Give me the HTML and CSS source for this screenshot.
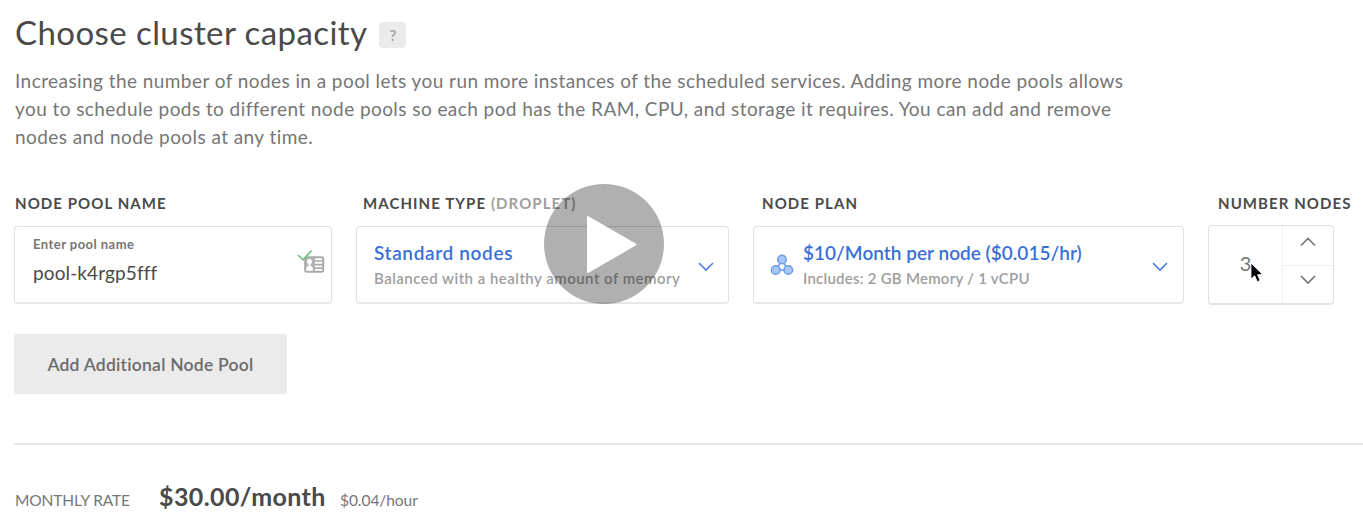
FILE: index.html
```html
<!DOCTYPE html>
<html lang="en">
<head>
<meta charset="utf-8">
<title>Choose cluster capacity</title>
<link rel="stylesheet" href="styles.css">
</head>
<body>
<main class="page">
  <header class="heading">
    <h1 class="title">Choose cluster capacity</h1>
    <span class="help">?</span>
  </header>
  <p class="intro">Increasing the number of nodes in a pool lets you run more instances of the scheduled services. Adding more node pools allows<br>you to schedule pods to different node pools so each pod has the RAM, CPU, and storage it requires. You can add and remove<br>nodes and node pools at any time.</p>

  <section class="pool">
    <div class="field field-name">
      <div class="label">NODE POOL NAME</div>
      <div class="box">
        <div class="copy">
          <div class="hint">Enter pool name</div>
          <div class="value">pool-k4rgp5fff</div>
        </div>
        <svg class="card-icon" width="30" height="26" viewBox="0 0 30 26">
          <rect x="8.200" y="7.200" width="18" height="14.600" rx="1.500" fill="#fff" stroke="#aaa" stroke-width="2"/>
          <path d="M16.900 7v15M17 11h9M17 14.600h9M17 18.200h9" stroke="#aaa" stroke-width="1.700"/>
          <path d="M8.500 7.500h8v14h-8z" fill="#b3b3b3"/>
          <circle cx="12.500" cy="11.500" r="2.500" fill="#fff"/>
          <path d="M9.200 20.800v-2.500q0-2 2.300-2.600v-3h2v3q2.300.6 2.300 2.600v2.500z" fill="#fff"/>
          <path d="M1 5l5 4.800L14.500.7" fill="none" stroke="#6fbf85" stroke-width="1.700"/>
        </svg>
      </div>
    </div>
    <div class="field field-machine">
      <div class="label">MACHINE TYPE <span class="light">(DROPLET)</span></div>
      <div class="box">
        <div class="copy">
          <div class="choice">Standard nodes</div>
          <div class="detail">Balanced with a healthy amount of memory</div>
        </div>
        <svg class="chevron" width="18" height="12" viewBox="0 0 18 12"><path d="M2 2l7 7 7-7"/></svg>
      </div>
      <svg class="play" width="120" height="120" viewBox="0 0 120 120">
        <circle cx="60" cy="60" r="60" fill="#000" fill-opacity=".31"/>
        <path d="M44 33l47.500 27.500L44 88z" fill="#fff" stroke="#fff" stroke-width="2" stroke-linejoin="round"/>
      </svg>
    </div>
    <div class="field field-plan">
      <div class="label">NODE PLAN</div>
      <div class="box">
        <svg class="nodes-icon" width="24" height="22" viewBox="0 0 24 22">
          <g fill="#a9c8f8" stroke="#6f9be6" stroke-width="1.500"><path d="M12 6L6 16h12z" fill="none"/><circle cx="12" cy="5.500" r="4.300"/><circle cx="5.700" cy="16" r="4.300"/><circle cx="18.300" cy="16" r="4.300"/></g>
        </svg>
        <div class="copy">
          <div class="choice">$10/Month per node ($0.015/hr)</div>
          <div class="detail">Includes: 2 GB Memory / 1 vCPU</div>
        </div>
        <svg class="chevron" width="18" height="12" viewBox="0 0 18 12"><path d="M2 2l7 7 7-7"/></svg>
      </div>
    </div>
    <div class="field field-count">
      <div class="label">NUMBER NODES</div>
      <div class="stepper">
        <div class="count">3
          <svg class="cursor" width="16" height="24" viewBox="0 0 16 24"><path d="M2 1v16l3.700-3.300 2.600 6 2.800-1.200-2.600-5.800 5-.3z" fill="#000" stroke="#fff" stroke-width=".8"/></svg>
        </div>
        <div class="steps">
          <div class="step"><svg class="arrow" width="18" height="12" viewBox="0 0 18 12"><path d="M2 9.500l7-7 7 7"/></svg></div>
          <div class="step"><svg class="arrow" width="18" height="12" viewBox="0 0 18 12"><path d="M2 2l7 7 7-7"/></svg></div>
        </div>
      </div>
    </div>
  </section>

  <button class="add">Add Additional Node Pool</button>

  <footer class="rate">
    <span class="rate-label">MONTHLY RATE</span>
    <strong class="monthly">$30.00/month</strong>
    <span class="hourly">$0.04/hour</span>
  </footer>
</main>
</body>
</html>
```
FILE: styles.css
```css
* { box-sizing: border-box; }
body { margin: 0; background: #fff; color: #4a4a4a; font-family: Lato, "Open Sans", sans-serif; font-variant-ligatures: none; overflow: hidden; }
.page { padding: 11px 0 0 14px; }
.heading { display: flex; align-items: center; gap: 12px; height: 42px; }
.title { margin: 0; padding-left: 1px; font-size: 33px; font-weight: 400; line-height: 42px; letter-spacing: .42px; white-space: nowrap; }
.help { width: 27px; height: 26px; margin-top: 6px; border-radius: 4px; background: #ebebeb; color: #a5a5a5; font-size: 15px; font-weight: 700; line-height: 26px; text-align: center; }
.intro { margin: 14px 0 0; padding-left: 1px; color: #767676; font-size: 19px; line-height: 28px; letter-spacing: .43px; white-space: nowrap; }
.pool { display: flex; margin-top: 40px; }
.field { position: relative; flex: none; }
.field-name { width: 318px; margin-right: 24px; }
.field-machine { width: 373px; margin-right: 24px; }
.field-plan { width: 431px; margin-right: 24px; }
.field-count { width: 126px; }
.label { height: 35px; padding-left: 1px; font-size: 15px; font-weight: 700; line-height: 25px; letter-spacing: 1.080px; white-space: nowrap; }
.field-machine .label { padding-left: 7px; }
.field-plan .label { padding-left: 9px; }
.field-count .label { padding-left: 10px; }
.light { color: #a0a0a0; }
.box { display: flex; align-items: center; height: 78px; border: 1px solid #e0e0e0; border-bottom: 2px solid #e8e8e8; border-radius: 4px; }
.copy { flex: 1; white-space: nowrap; padding-left: 17px; }
.field-name .copy { padding: 0 0 3px 18px; }
.hint { color: #757575; font-size: 13px; font-weight: 700; line-height: 20px; letter-spacing: .46px; }
.value { font-size: 19px; line-height: 38px; letter-spacing: .12px; }
.choice { color: #3a6fd8; font-size: 19px; font-weight: 600; line-height: 26px; letter-spacing: .64px; }
.detail { color: #9e9e9e; font-size: 15px; font-weight: 600; line-height: 24px; letter-spacing: .48px; }
.field-plan .choice { letter-spacing: .02px; }
.field-plan .detail { letter-spacing: .24px; }
.card-icon { margin: 0 4px 3px 0; }
.chevron { margin: 4px 13px 0 0; fill: none; stroke: #4a7de0; stroke-width: 1.600; }
.field-plan .chevron { margin-right: 14px; }
.nodes-icon { margin-left: 16px; }
.field-plan .copy { padding-left: 9px; }
.play { position: absolute; left: 188px; top: -7px; }
.stepper { display: flex; height: 80px; margin-top: -1px; border: 1px solid #e0e0e0; border-bottom: 2px solid #e4e4e4; border-radius: 4px; }
.count { position: relative; width: 74px; border-right: 1px solid #f0f0f0; color: #777; font-size: 20px; line-height: 75px; text-align: center; }
.cursor { position: absolute; left: 40px; top: 36px; }
.steps { flex: 1; display: grid; grid-template-rows: 1fr 1fr; }
.step { display: grid; place-items: center; padding-bottom: 6px; }
.step + .step { padding-bottom: 9px; border-top: 1px solid #f0f0f0; }
.arrow { fill: none; stroke: #777; stroke-width: 1.700; }
.add { display: block; width: 273px; height: 60px; margin-top: 29px; padding: 0; border: 0; border-radius: 3px; background: #ebebeb; color: #6b6b6b; font: 600 17.500px Lato, sans-serif; letter-spacing: .24px; white-space: nowrap; }
.rate { display: flex; align-items: baseline; margin-top: 49px; padding-top: 36px; border-top: 2px solid #e8e8e8; color: #767676; font-size: 15.500px; letter-spacing: -.06px; white-space: nowrap; }
.rate-label { width: 145px; padding-left: 1px; letter-spacing: -.12px; }
.monthly { width: 181px; color: #4a4a4a; font-size: 25px; font-weight: 700; letter-spacing: .4px; }
```
